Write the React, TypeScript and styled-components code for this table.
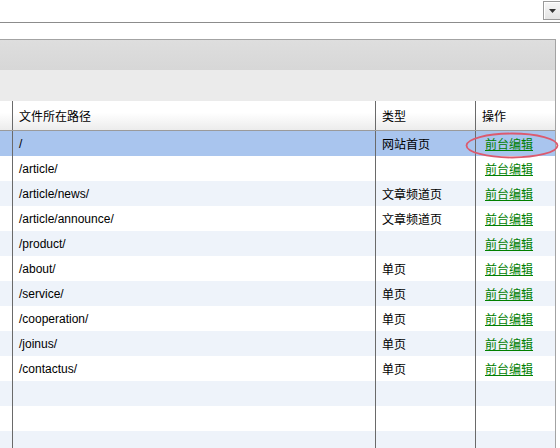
import React from "react";
import styled, { createGlobalStyle } from "styled-components";

const Global = createGlobalStyle`
  html, body { margin: 0; padding: 0; background: #fff; }
  body {
    font-family: "Liberation Sans", Arial, "Noto Sans CJK SC", sans-serif;
    font-size: 12px;
    color: #000;
    overflow: hidden;
  }
`;

const Page = styled.div`
  width: 560px;
  height: 448px;
  overflow: hidden;
`;

const TopBar = styled.div`
  height: 22px;
  border-bottom: 1px solid #8c8c8c;
  display: flex;
  justify-content: flex-end;
  align-items: flex-start;
`;

const DropButton = styled.div`
  margin-top: 1px;
  width: 17px;
  height: 19px;
  box-sizing: border-box;
  border: 1px solid #9a9a9a;
  border-right: none;
  background: linear-gradient(#f7f7f7, #e4e4e4);
  box-shadow: inset 1px 1px 0 #fff;
  display: flex;
  align-items: center;
  justify-content: center;
`;

const Panel = styled.div`
  margin-top: 16px;
  width: 555px;
  border-top: 1px solid #a3a3a3;
  border-right: 1px solid #a3a3a3;
`;

const Band = styled.div<{ $h: number; $bg: string }>`
  height: ${(p) => p.$h}px;
  background: ${(p) => p.$bg};
`;

const Row = styled.div<{ $bg: string }>`
  display: grid;
  grid-template-columns: 12px 363px 100px 80px;
  height: 25px;
  background: ${(p) => p.$bg};
`;

const HeadRow = styled(Row)`
  height: 29px;
  border-bottom: 1px solid #9a9a9a;
`;

const Cell = styled.div<{ $first?: boolean }>`
  position: relative;
  border-left: ${(p) => (p.$first ? "none" : "1px solid #6a6a6a")};
  padding-left: 6px;
  display: flex;
  align-items: center;
  font-family: "Liberation Sans", Arial, "Noto Sans CJK SC", sans-serif;
  font-size: 12px;
  white-space: nowrap;
`;

const Link = styled.a`
  margin-left: 3px;
  color: #008000;
  text-decoration: underline;
  font-family: "Noto Sans CJK SC", sans-serif;
  font-size: 12px;
  cursor: pointer;
`;

const Mark = styled.svg`
  position: absolute;
  left: -11px;
  top: 1px;
  width: 94px;
  height: 27px;
  pointer-events: none;
`;

const rows: { path: string; type: string; link: boolean }[] = [
  { path: "/", type: "网站首页", link: true },
  { path: "/article/", type: "", link: true },
  { path: "/article/news/", type: "文章频道页", link: true },
  { path: "/article/announce/", type: "文章频道页", link: true },
  { path: "/product/", type: "", link: true },
  { path: "/about/", type: "单页", link: true },
  { path: "/service/", type: "单页", link: true },
  { path: "/cooperation/", type: "单页", link: true },
  { path: "/joinus/", type: "单页", link: true },
  { path: "/contactus/", type: "单页", link: true },
  { path: "", type: "", link: false },
  { path: "", type: "", link: false },
  { path: "", type: "", link: false },
];

export default function App() {
  return (
    <Page>
      <Global />
      <TopBar>
        <DropButton>
          <svg width="7" height="4" viewBox="0 0 7 4">
            <path d="M0 0H7L3.5 4Z" fill="#333" />
          </svg>
        </DropButton>
      </TopBar>
      <Panel>
        <Band $h={30} $bg="linear-gradient(#dedede, #d7d7d7)" />
        <Band $h={31} $bg="#ebebeb" />
        <HeadRow $bg="linear-gradient(#ffffff 40%, #ececec)">
          <Cell $first />
          <Cell>文件所在路径</Cell>
          <Cell>类型</Cell>
          <Cell>操作</Cell>
        </HeadRow>
        {rows.map((r, i) => {
          const bg = i === 0 ? "#a9c5ee" : i % 2 === 1 ? "#ffffff" : "#eef3fa";
          return (
            <Row key={i} $bg={bg}>
              <Cell $first />
              <Cell>{r.path}</Cell>
              <Cell>{r.type}</Cell>
              <Cell>
                {r.link && <Link>前台编辑</Link>}
                {i === 0 && (
                  <Mark viewBox="0 0 94 27">
                    <ellipse cx="47" cy="13.5" rx="45.5" ry="12" fill="none" stroke="#dc5a6e" strokeWidth="1.8" />
                  </Mark>
                )}
              </Cell>
            </Row>
          );
        })}
      </Panel>
    </Page>
  );
}
